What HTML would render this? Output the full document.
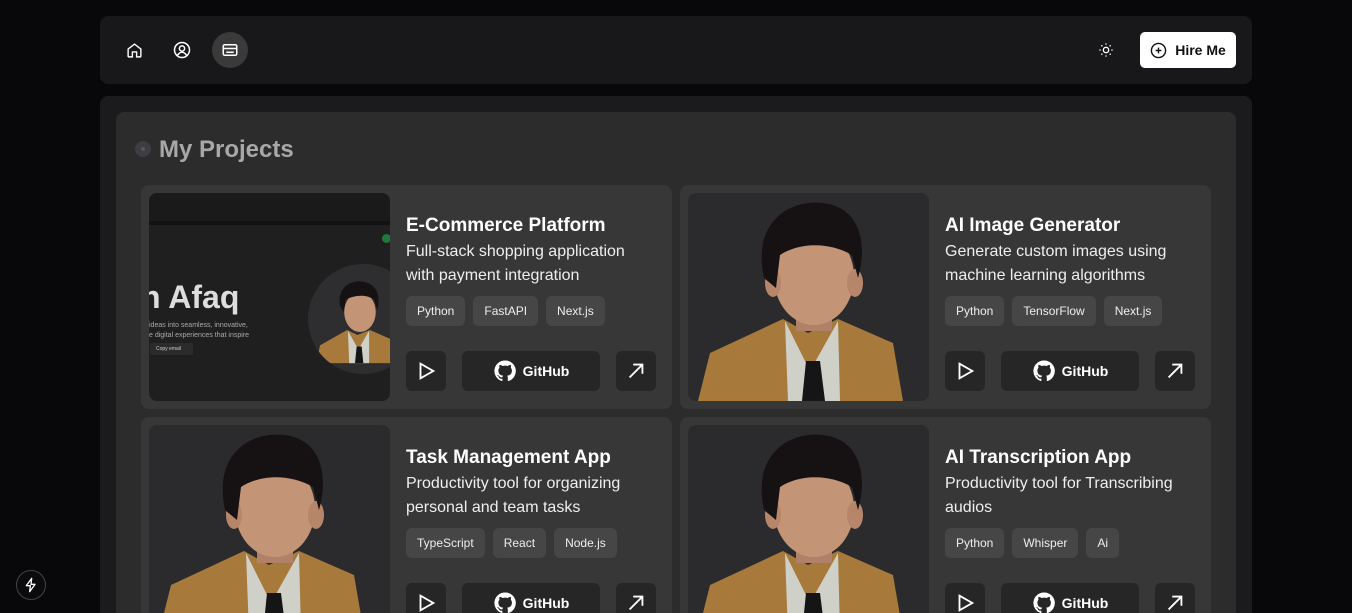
<!DOCTYPE html>
<html><head><meta charset="utf-8"><style>
*{margin:0;padding:0;box-sizing:border-box}
html,body{width:1352px;height:613px;overflow:hidden}
body{background:#08080a;font-family:"Liberation Sans",sans-serif;color:#fff;position:relative}
.nav{position:absolute;left:100px;top:16px;width:1152px;height:68px;background:#18181a;border-radius:8px}
.ic{position:absolute;top:16px;width:36px;height:36px;border-radius:50%;display:flex;align-items:center;justify-content:center}
.hire{position:absolute;left:1040px;top:16px;width:96px;height:36px;background:#fff;border-radius:5px;color:#111;font-size:14px;font-weight:bold;display:flex;align-items:center;justify-content:center;gap:8px}
.main{position:absolute;left:100px;top:96px;width:1152px;height:517px;background:#1b1b1d;border-radius:8px 8px 0 0}
.panel{position:absolute;left:116px;top:112px;width:1120px;height:501px;background:#2c2c2c;border-radius:8px 8px 0 0}
.h{position:absolute;left:159px;top:136px;font-size:24px;font-weight:bold;color:#a8a8a8}
.dot{position:absolute;left:135px;top:141px;width:16px;height:16px;border-radius:50%;background:#3d3d42}
.dot::after{content:"";position:absolute;left:6px;top:6px;width:4px;height:4px;border-radius:50%;background:#555}
.card{position:absolute;width:531px;height:224px;background:#373737;border-radius:8px}
.img{position:absolute;left:8px;top:8px;width:241px;height:208px;border-radius:8px;overflow:hidden;background:#2b2b2e}
.t{position:absolute;left:265px;top:30px;font-size:19px;font-weight:bold}
.d{position:absolute;left:265px;top:55px;font-size:16px;line-height:24px;color:#eee;width:250px}
.pills{position:absolute;left:265px;top:111px;display:flex;gap:8px}
.pill{height:30px;padding:0 11px;background:#464646;border-radius:6px;font-size:12px;line-height:30px;color:#eee}
.b{position:absolute;top:166px;height:40px;background:#262626;border-radius:6px;display:flex;align-items:center;justify-content:center;gap:6px;font-size:14px;font-weight:bold}
.bolt{position:absolute;left:16px;top:570px;width:30px;height:30px;border-radius:50%;border:1px solid #444;display:flex;align-items:center;justify-content:center;background:#0b0b0d}
</style></head><body>
<div class="nav">
 <div class="ic" style="left:16px"><svg width="17" height="17" viewBox="0 0 24 24" fill="none" stroke="#fff" stroke-width="2"><path d="M3 10l9-7 9 7v10a1 1 0 0 1-1 1h-5v-7h-6v7H4a1 1 0 0 1-1-1z"/></svg></div>
 <div class="ic" style="left:64px"><svg width="18" height="18" viewBox="0 0 24 24" fill="none" stroke="#fff" stroke-width="2"><circle cx="12" cy="12" r="10"/><circle cx="12" cy="10" r="3.5"/><path d="M6 19c2-3 4-4 6-4s4 1 6 4"/></svg></div>
 <div class="ic" style="left:112px;background:#3a3a3a"><svg width="18" height="18" viewBox="0 0 24 24" fill="none" stroke="#fff" stroke-width="2"><rect x="3" y="5" width="18" height="14" rx="2"/><path d="M3 10h18M7 15h10"/></svg></div>
 <div class="ic" style="left:988px"><svg width="16" height="16" viewBox="0 0 24 24" fill="none" stroke="#fff" stroke-width="2"><circle cx="12" cy="12" r="4"/><path d="M12 2v2M12 20v2M2 12h2M20 12h2M5 5l1.5 1.5M17.5 17.5L19 19M5 19l1.5-1.5M17.5 6.5L19 5"/></svg></div>
 <div class="hire"><svg width="17" height="17" viewBox="0 0 24 24" fill="none" stroke="#111" stroke-width="2"><circle cx="12" cy="12" r="10"/><path d="M12 8v8M8 12h8"/></svg>Hire Me</div>
</div>
<div class="main"></div>
<div class="panel"></div>
<div class="dot"></div>
<div class="h">My Projects</div>

<div class="card" style="left:141px;top:185px">
 <div class="img" style="background:#1f1f1f">
  <div style="position:absolute;left:0;top:0;width:241px;height:28px;background:#1a1a1a"></div>
  <div style="position:absolute;left:0;top:28px;width:241px;height:4px;background:#121212"></div>
  <div style="position:absolute;left:233px;top:41px;width:9px;height:9px;border-radius:50%;background:#1f7a3a"></div>
  <div style="position:absolute;left:-8px;top:86px;font-size:32px;font-weight:bold;color:#ddd">n Afaq</div>
  <div style="position:absolute;left:0;top:128px;font-size:7px;color:#aaa;line-height:10px">ideas into seamless, innovative,<br>e digital experiences that inspire</div>
  <div style="position:absolute;left:1px;top:150px;width:43px;height:12px;background:#2b2b2b;border-radius:2px;font-size:5px;color:#ccc;line-height:12px;padding-left:6px">Copy email</div>
  <div style="position:absolute;left:159px;top:71px;width:110px;height:110px;border-radius:50%;background:#2e2e30;overflow:hidden">
   <svg viewBox="0 0 241 208" style="position:absolute;left:8px;top:6px;width:100px;height:100px"><g transform="translate(-20,0)">
    <path d="M20 208 L30 165 L95 128 L120 140 L150 128 L200 150 L215 208Z" fill="#a77a3c"/><path d="M97 130 L122 175 L148 130 L148 208 L100 208Z" fill="#cfd1c8"/><path d="M118 168 L130 168 L134 208 L114 208Z" fill="#151515"/><ellipse cx="126" cy="85" rx="38" ry="48" fill="#c49476"/><path d="M78 70 C70 30 100 5 135 12 C170 18 175 50 168 80 L160 55 C140 40 110 45 92 55 L86 85Z" fill="#161213"/></g></svg>
  </div>
 </div>
 <div class="t">E-Commerce Platform</div>
 <div class="d">Full-stack shopping application with payment integration</div>
 <div class="pills"><div class="pill">Python</div><div class="pill">FastAPI</div><div class="pill">Next.js</div></div>
 <div class="b" style="left:265px;width:40px"><svg width="22" height="22" viewBox="0 0 24 24" fill="none" stroke="#fff" stroke-width="2"><path d="M6 4l14 8-14 8z"/></svg></div>
 <div class="b" style="left:321px;width:138px"><svg width="24" height="24" viewBox="0 0 24 24" fill="#fff"><path d="M12 1.5a10.5 10.5 0 0 0-3.3 20.5c.5.1.7-.2.7-.5v-1.8c-2.9.6-3.5-1.4-3.5-1.4-.5-1.2-1.2-1.5-1.2-1.5-1-.7.1-.7.1-.7 1 .1 1.6 1.1 1.6 1.1.9 1.6 2.5 1.1 3.1.9.1-.7.4-1.1.7-1.4-2.3-.3-4.8-1.2-4.8-5.2 0-1.1.4-2.1 1.1-2.8-.1-.3-.5-1.3.1-2.8 0 0 .9-.3 2.9 1.1a10 10 0 0 1 5.3 0c2-1.4 2.9-1.1 2.9-1.1.6 1.5.2 2.5.1 2.8.7.7 1.1 1.7 1.1 2.8 0 4-2.5 4.9-4.8 5.2.4.3.7 1 .7 1.9v2.9c0 .3.2.6.7.5A10.5 10.5 0 0 0 12 1.5z"/></svg>GitHub</div>
 <div class="b" style="left:475px;width:40px"><svg width="22" height="22" viewBox="0 0 24 24" fill="none" stroke="#fff" stroke-width="2"><path d="M5 19L19 5M9 5h10v10"/></svg></div>
</div>

<div class="card" style="left:680px;top:185px">
 <div class="img"><svg width="241" height="208" viewBox="0 0 241 208"><path d="M10 208 L22 160 L95 126 L120 140 L150 126 L205 150 L215 208Z" fill="#a77a3c"/><path d="M97 128 L122 178 L150 128 L152 208 L100 208Z" fill="#cfd1c8"/><path d="M118 168 L132 168 L137 208 L114 208Z" fill="#151515"/><rect x="108" y="110" width="36" height="28" fill="#b08068"/><ellipse cx="126" cy="84" rx="40" ry="48" fill="#c49476"/><ellipse cx="85" cy="90" rx="8" ry="14" fill="#b7866a"/><ellipse cx="167" cy="90" rx="8" ry="14" fill="#b7866a"/><path d="M76 85 C64 30 100 6 135 10 C172 14 180 50 170 85 L164 62 C140 48 110 50 92 62 L88 95Z" fill="#161213"/></svg></div>
 <div class="t">AI Image Generator</div>
 <div class="d">Generate custom images using machine learning algorithms</div>
 <div class="pills"><div class="pill">Python</div><div class="pill">TensorFlow</div><div class="pill">Next.js</div></div>
 <div class="b" style="left:265px;width:40px"><svg width="22" height="22" viewBox="0 0 24 24" fill="none" stroke="#fff" stroke-width="2"><path d="M6 4l14 8-14 8z"/></svg></div>
 <div class="b" style="left:321px;width:138px"><svg width="24" height="24" viewBox="0 0 24 24" fill="#fff"><path d="M12 1.5a10.5 10.5 0 0 0-3.3 20.5c.5.1.7-.2.7-.5v-1.8c-2.9.6-3.5-1.4-3.5-1.4-.5-1.2-1.2-1.5-1.2-1.5-1-.7.1-.7.1-.7 1 .1 1.6 1.1 1.6 1.1.9 1.6 2.5 1.1 3.1.9.1-.7.4-1.1.7-1.4-2.3-.3-4.8-1.2-4.8-5.2 0-1.1.4-2.1 1.1-2.8-.1-.3-.5-1.3.1-2.8 0 0 .9-.3 2.9 1.1a10 10 0 0 1 5.3 0c2-1.4 2.9-1.1 2.9-1.1.6 1.5.2 2.5.1 2.8.7.7 1.1 1.7 1.1 2.8 0 4-2.5 4.9-4.8 5.2.4.3.7 1 .7 1.9v2.9c0 .3.2.6.7.5A10.5 10.5 0 0 0 12 1.5z"/></svg>GitHub</div>
 <div class="b" style="left:475px;width:40px"><svg width="22" height="22" viewBox="0 0 24 24" fill="none" stroke="#fff" stroke-width="2"><path d="M5 19L19 5M9 5h10v10"/></svg></div>
</div>

<div class="card" style="left:141px;top:417px">
 <div class="img"><svg width="241" height="208" viewBox="0 0 241 208"><path d="M10 208 L22 160 L95 126 L120 140 L150 126 L205 150 L215 208Z" fill="#a77a3c"/><path d="M97 128 L122 178 L150 128 L152 208 L100 208Z" fill="#cfd1c8"/><path d="M118 168 L132 168 L137 208 L114 208Z" fill="#151515"/><rect x="108" y="110" width="36" height="28" fill="#b08068"/><ellipse cx="126" cy="84" rx="40" ry="48" fill="#c49476"/><ellipse cx="85" cy="90" rx="8" ry="14" fill="#b7866a"/><ellipse cx="167" cy="90" rx="8" ry="14" fill="#b7866a"/><path d="M76 85 C64 30 100 6 135 10 C172 14 180 50 170 85 L164 62 C140 48 110 50 92 62 L88 95Z" fill="#161213"/></svg></div>
 <div class="t">Task Management App</div>
 <div class="d">Productivity tool for organizing personal and team tasks</div>
 <div class="pills"><div class="pill">TypeScript</div><div class="pill">React</div><div class="pill">Node.js</div></div>
 <div class="b" style="left:265px;width:40px"><svg width="22" height="22" viewBox="0 0 24 24" fill="none" stroke="#fff" stroke-width="2"><path d="M6 4l14 8-14 8z"/></svg></div>
 <div class="b" style="left:321px;width:138px"><svg width="24" height="24" viewBox="0 0 24 24" fill="#fff"><path d="M12 1.5a10.5 10.5 0 0 0-3.3 20.5c.5.1.7-.2.7-.5v-1.8c-2.9.6-3.5-1.4-3.5-1.4-.5-1.2-1.2-1.5-1.2-1.5-1-.7.1-.7.1-.7 1 .1 1.6 1.1 1.6 1.1.9 1.6 2.5 1.1 3.1.9.1-.7.4-1.1.7-1.4-2.3-.3-4.8-1.2-4.8-5.2 0-1.1.4-2.1 1.1-2.8-.1-.3-.5-1.3.1-2.8 0 0 .9-.3 2.9 1.1a10 10 0 0 1 5.3 0c2-1.4 2.9-1.1 2.9-1.1.6 1.5.2 2.5.1 2.8.7.7 1.1 1.7 1.1 2.8 0 4-2.5 4.9-4.8 5.2.4.3.7 1 .7 1.9v2.9c0 .3.2.6.7.5A10.5 10.5 0 0 0 12 1.5z"/></svg>GitHub</div>
 <div class="b" style="left:475px;width:40px"><svg width="22" height="22" viewBox="0 0 24 24" fill="none" stroke="#fff" stroke-width="2"><path d="M5 19L19 5M9 5h10v10"/></svg></div>
</div>

<div class="card" style="left:680px;top:417px">
 <div class="img"><svg width="241" height="208" viewBox="0 0 241 208"><path d="M10 208 L22 160 L95 126 L120 140 L150 126 L205 150 L215 208Z" fill="#a77a3c"/><path d="M97 128 L122 178 L150 128 L152 208 L100 208Z" fill="#cfd1c8"/><path d="M118 168 L132 168 L137 208 L114 208Z" fill="#151515"/><rect x="108" y="110" width="36" height="28" fill="#b08068"/><ellipse cx="126" cy="84" rx="40" ry="48" fill="#c49476"/><ellipse cx="85" cy="90" rx="8" ry="14" fill="#b7866a"/><ellipse cx="167" cy="90" rx="8" ry="14" fill="#b7866a"/><path d="M76 85 C64 30 100 6 135 10 C172 14 180 50 170 85 L164 62 C140 48 110 50 92 62 L88 95Z" fill="#161213"/></svg></div>
 <div class="t">AI Transcription App</div>
 <div class="d">Productivity tool for Transcribing audios</div>
 <div class="pills"><div class="pill">Python</div><div class="pill">Whisper</div><div class="pill">Ai</div></div>
 <div class="b" style="left:265px;width:40px"><svg width="22" height="22" viewBox="0 0 24 24" fill="none" stroke="#fff" stroke-width="2"><path d="M6 4l14 8-14 8z"/></svg></div>
 <div class="b" style="left:321px;width:138px"><svg width="24" height="24" viewBox="0 0 24 24" fill="#fff"><path d="M12 1.5a10.5 10.5 0 0 0-3.3 20.5c.5.1.7-.2.7-.5v-1.8c-2.9.6-3.5-1.4-3.5-1.4-.5-1.2-1.2-1.5-1.2-1.5-1-.7.1-.7.1-.7 1 .1 1.6 1.1 1.6 1.1.9 1.6 2.5 1.1 3.1.9.1-.7.4-1.1.7-1.4-2.3-.3-4.8-1.2-4.8-5.2 0-1.1.4-2.1 1.1-2.8-.1-.3-.5-1.3.1-2.8 0 0 .9-.3 2.9 1.1a10 10 0 0 1 5.3 0c2-1.4 2.9-1.1 2.9-1.1.6 1.5.2 2.5.1 2.8.7.7 1.1 1.7 1.1 2.8 0 4-2.5 4.9-4.8 5.2.4.3.7 1 .7 1.9v2.9c0 .3.2.6.7.5A10.5 10.5 0 0 0 12 1.5z"/></svg>GitHub</div>
 <div class="b" style="left:475px;width:40px"><svg width="22" height="22" viewBox="0 0 24 24" fill="none" stroke="#fff" stroke-width="2"><path d="M5 19L19 5M9 5h10v10"/></svg></div>
</div>

<div class="bolt"><svg width="16" height="16" viewBox="0 0 24 24" fill="none" stroke="#fff" stroke-width="2" stroke-linejoin="round"><path d="M13 2L5 13h6l-1 9 8-11h-6z"/></svg></div>
</body></html>
